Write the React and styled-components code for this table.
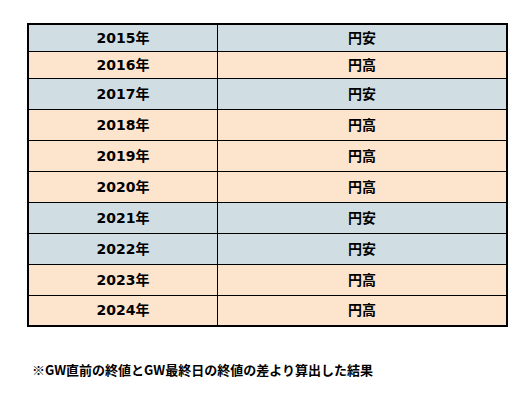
import React from 'react'
import styled, { createGlobalStyle } from 'styled-components'

const GlobalStyle = createGlobalStyle`
  html, body {
    margin: 0;
    padding: 0;
    background: #fff;
  }
  body {
    font-family: "Noto Sans CJK JP", "Noto Sans", sans-serif;
    color: #000;
  }
`

const Page = styled.div`
  width: 530px;
  height: 400px;
  padding: 23px 0 0 27px;
  box-sizing: border-box;
`

const Table = styled.table`
  border-collapse: collapse;
  border: 2px solid #000;
  width: 476px;
  table-layout: fixed;
`

const Row = styled.tr`
  height: ${props => props.$h}px;
  background: ${props => props.$tone === 'blue' ? '#d0dee3' : '#fde4cd'};
`

const Cell = styled.td`
  border: 1px solid #000;
  padding: 0;
  text-align: center;
  vertical-align: middle;
  font-family: "DejaVu Sans", "Noto Sans CJK JP", sans-serif;
  font-size: 14px;
  font-weight: 700;
  line-height: 1;
  width: ${props => props.$w}px;
`

const Note = styled.p`
  margin: 36px 0 0 5px;
  font-size: 13px;
  font-weight: 700;
  line-height: 1;
`

const rows = [
  { year: '2015年', result: '円安', h: 27 },
  { year: '2016年', result: '円高', h: 27 },
  { year: '2017年', result: '円安', h: 31 },
  { year: '2018年', result: '円高', h: 31 },
  { year: '2019年', result: '円高', h: 31 },
  { year: '2020年', result: '円高', h: 31 },
  { year: '2021年', result: '円安', h: 31 },
  { year: '2022年', result: '円安', h: 31 },
  { year: '2023年', result: '円高', h: 31 },
  { year: '2024年', result: '円高', h: 31 },
]

const App = () => {
  return (
    <Page>
      <GlobalStyle />
      <Table>
        <tbody>
          {rows.map(r => (
            <Row key={r.year} $h={r.h} $tone={r.result === '円安' ? 'blue' : 'peach'}>
              <Cell $w={188}>{r.year}</Cell>
              <Cell $w={288}>{r.result}</Cell>
            </Row>
          ))}
        </tbody>
      </Table>
      <Note>※GW直前の終値とGW最終日の終値の差より算出した結果</Note>
    </Page>
  )
}

export default App
